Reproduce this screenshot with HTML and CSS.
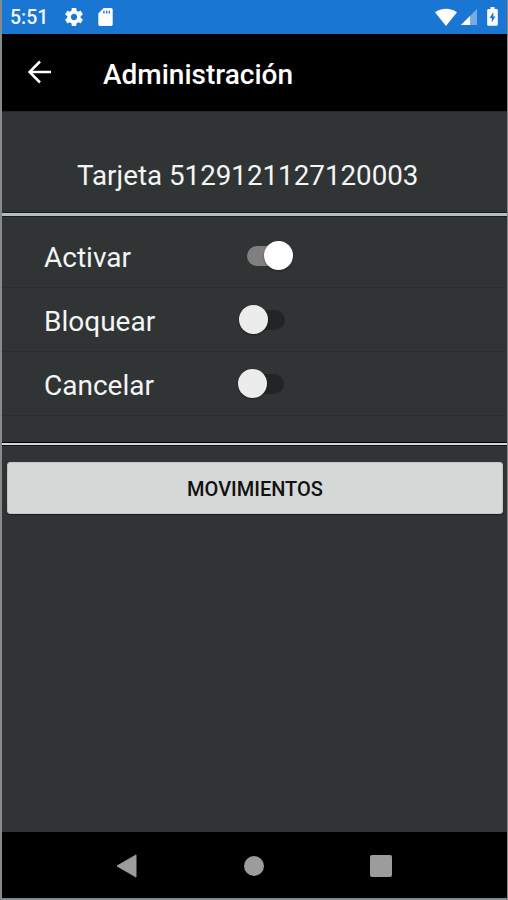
FILE: index.html
```
<!DOCTYPE html>
<html lang="es">
<head>
    <meta charset="UTF-8">
    <meta name="viewport" content="width=device-width, initial-scale=1.0">
    <title>Administración</title>
    <link rel="stylesheet" href="styles.css">
</head>
<body>
    <div class="phone">
        <div class="status-bar">
            <span class="clock">5:51</span>
            <svg class="icon-gear" viewBox="2 2 20 20"><path d="M19.43 12.98c.04-.32.07-.64.07-.98s-.03-.66-.07-.98l2.11-1.65c.19-.15.24-.42.12-.64l-2-3.46c-.12-.22-.39-.3-.61-.22l-2.49 1c-.52-.4-1.08-.73-1.69-.98l-.38-2.65C14.46 2.18 14.25 2 14 2h-4c-.25 0-.46.18-.49.42l-.38 2.65c-.61.25-1.17.59-1.69.98l-2.49-1c-.23-.09-.49 0-.61.22l-2 3.46c-.13.22-.07.49.12.64l2.11 1.65c-.04.32-.07.65-.07.98s.03.66.07.98l-2.11 1.65c-.19.15-.24.42-.12.64l2 3.46c.12.22.39.3.61.22l2.49-1c.52.4 1.08.73 1.69.98l.38 2.65c.03.24.24.42.49.42h4c.25 0 .46-.18.49-.42l.38-2.65c.61-.25 1.17-.59 1.69-.98l2.49 1c.23.09.49 0 .61-.22l2-3.46c.12-.22.07-.49-.12-.64l-2.11-1.65zM12 15.5c-1.93 0-3.5-1.57-3.5-3.5s1.57-3.5 3.5-3.5 3.5 1.57 3.5 3.5-1.57 3.5-3.5 3.5z"/></svg>
            <svg class="icon-card" viewBox="4 2 16 20"><path d="M18 2h-8L4.02 8 4 20c0 1.100.9 2 2 2h12c1.100 0 2-.9 2-2V4c0-1.100-.9-2-2-2z"/><path class="cut" d="M9.500 5h1.500v3H9.500zM12.500 5h1.500v3h-1.500zM15.500 5H17v3h-1.500z"/></svg>
            <div class="status-right">
                <svg class="icon-wifi" viewBox="0 0 22 18"><path d="M0 4.200C6 -.5 16 -.5 22 4.200L11 18z"/></svg>
                <svg class="icon-signal" viewBox="0 0 16 16"><path class="faded" d="M0 16L16 0v16z"/><path d="M0 16l9-9v9z"/></svg>
                <svg class="icon-battery" viewBox="0 0 11 19"><path d="M3.500 0h4v2H9.500a1.300 1.300 0 0 1 1.300 1.300v14.200a1.300 1.300 0 0 1-1.300 1.300h-8A1.300 1.300 0 0 1 .2 17.500V3.300A1.300 1.300 0 0 1 1.500 2h2z"/><path class="cut" d="M6.300 5L2.700 11h2.100v4.500L8.300 9.500H6.300z"/></svg>
            </div>
        </div>

        <header class="toolbar">
            <svg class="icon-back" viewBox="0 0 24 24"><path d="M23 12H2M12 1.500L1.500 12 12 22.500"/></svg>
            <h1>Administración</h1>
        </header>

        <main>
            <div class="card-number">Tarjeta 5129121127120003</div>

            <div class="options">
                <div class="option">
                    <span class="label">Activar</span>
                    <span class="switch on"></span>
                </div>
                <div class="option">
                    <span class="label">Bloquear</span>
                    <span class="switch"></span>
                </div>
                <div class="option">
                    <span class="label cancel">Cancelar</span>
                    <span class="switch"></span>
                </div>
            </div>

            <button class="button">MOVIMIENTOS</button>
        </main>

        <nav class="nav-bar">
            <svg class="nav-back" viewBox="0 0 21 24"><path d="M1 12L20 1v22z"/></svg>
            <span class="nav-home"></span>
            <span class="nav-recent"></span>
        </nav>
    </div>
</body>
</html>
```
FILE: styles.css
```
* {
    box-sizing: border-box;
}
body {
    margin: 0;
    font-family: Roboto, sans-serif;
    color: #f4f5f5;
    background-color: #303435;
}
.phone {
    display: flex;
    flex-direction: column;
    height: 900px;
    border: solid #858a8a;
    border-width: 0 1px 2px 2px;
    overflow: hidden;
}
.status-bar {
    display: flex;
    align-items: center;
    height: 34px;
    padding: 0 9px 0 8px;
    background-color: #1976d2;
}
.status-bar svg {
    fill: #fff;
}
.status-bar svg .cut {
    fill: #1976d2;
}
.clock {
    width: 55px;
    font-size: 19.5px;
    font-weight: 500;
}
.icon-gear {
    width: 18px;
    height: 18px;
    margin-bottom: 1px;
}
.icon-card {
    width: 15px;
    height: 18px;
    margin: 0 0 1px 15px;
}
.status-right {
    display: flex;
    align-items: center;
    margin-left: auto;
}
.icon-wifi {
    width: 22px;
    height: 18px;
    margin-bottom: 1px;
}
.icon-signal {
    width: 16px;
    height: 16px;
    margin-left: 4px;
}
.icon-signal .faded {
    opacity: 0.4;
}
.icon-battery {
    width: 11px;
    height: 19px;
    margin: 0 0 1px 10px;
}
.toolbar {
    display: flex;
    align-items: center;
    height: 77px;
    padding-left: 26px;
    background-color: #000;
}
.icon-back {
    width: 24px;
    height: 24px;
    margin-bottom: 2px;
    fill: none;
    stroke: #fff;
    stroke-width: 2.5;
}
.toolbar h1 {
    margin: 3px 0 0 51px;
    font-size: 28px;
    font-weight: 500;
    color: #fff;
}
main {
    flex: 1;
    border-top: 1px solid #252829;
}
.card-number {
    height: 101px;
    padding: 47px 0 0 75px;
    border-bottom: 1px solid #171b1b;
    font-size: 27.75px;
    line-height: 33px;
    white-space: nowrap;
}
.options {
    height: 232px;
    padding-top: 8px;
    border-top: 3px solid #b7bfbd;
    border-bottom: 2px solid #d2d8d5;
    box-shadow: inset 0 1px #171b1b, inset 0 -1px #000, 0 1px #101313;
}
.option {
    display: flex;
    align-items: center;
    height: 64px;
    padding-left: 42px;
    border-bottom: 1px solid #2a2e2f;
    font-size: 28px;
}
.label {
    width: 195px;
    padding-top: 3px;
}
.label.cancel {
    width: 194px;
}
.switch {
    display: flex;
    align-items: center;
    width: 47px;
    height: 30px;
}
.switch::before {
    content: "";
    width: 29px;
    height: 29px;
    border-radius: 50%;
    background-color: #ececec;
    box-shadow: 0 1px 2px rgba(0,0,0,0.4);
    z-index: 1;
}
.switch::after {
    content: "";
    width: 36px;
    height: 20px;
    margin-left: -19px;
    border-radius: 10px;
    background-color: #222526;
}
.switch.on {
    flex-direction: row-reverse;
    justify-content: flex-end;
    margin-left: 8px;
}
.switch.on::before {
    margin-left: -19px;
    background-color: #fff;
}
.switch.on::after {
    margin-left: 0;
    background-color: #808080;
}
.button {
    display: block;
    width: calc(100% - 9px);
    height: 52px;
    margin: 17px 4px 0 5px;
    padding: 1px 0 0;
    border: 1px solid #c3c6c4;
    border-radius: 3px;
    background-color: #d6d8d7;
    box-shadow: 0 1px 1px #1a1d1d;
    color: #111;
    font-family: Roboto, sans-serif;
    font-size: 20px;
    font-weight: 500;
}
.nav-bar {
    display: flex;
    align-items: center;
    height: 66px;
    padding: 1px 0 0 114px;
    background-color: #000;
}
.nav-back {
    width: 21px;
    height: 24px;
    fill: #9c9c9c;
    stroke: #9c9c9c;
    stroke-linejoin: round;
}
.nav-home {
    width: 20px;
    height: 20px;
    margin-left: 107px;
    border-radius: 50%;
    background-color: #9c9c9c;
}
.nav-recent {
    width: 22px;
    height: 22px;
    margin-left: 106px;
    border-radius: 2px;
    background-color: #9c9c9c;
}
```
